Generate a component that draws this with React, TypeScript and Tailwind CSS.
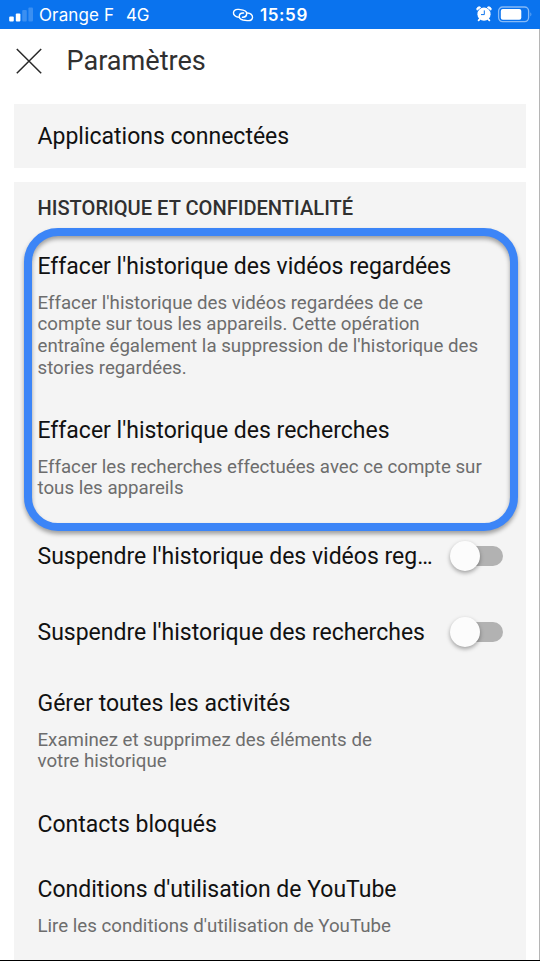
import type { ReactNode } from 'react';

interface SettingProps {
  title: string;
  lines?: string[];
  className: string;
}

function Setting({ title, lines, className }: SettingProps) {
  return (
    <div className={className}>
      <h2 className="whitespace-nowrap text-[23px] leading-7 text-[#111]">{title}</h2>
      {lines && (
        <p className="mt-[11.6px] whitespace-nowrap text-[18.7px] leading-[21.8px] text-[#6d6d6d]">
          {lines.map((line) => (
            <span key={line} className="block">
              {line}
            </span>
          ))}
        </p>
      )}
    </div>
  );
}

function ToggleRow({ children, className }: { children: ReactNode; className: string }) {
  return (
    <div className={`flex h-7 items-center justify-between pr-[23.5px] ${className}`}>
      <span className="whitespace-nowrap text-[23px] leading-7 text-[#111]">{children}</span>
      <button
        type="button"
        role="switch"
        aria-checked="false"
        className="-mt-0.5 flex h-5 w-[47px] items-center rounded-full bg-[#b2b2b2]"
      >
        <span className="-ml-[6px] size-[30px] shrink-0 rounded-full bg-[#fcfcfc] shadow-[0_2px_4px_rgba(0,0,0,0.35)]" />
      </button>
    </div>
  );
}

function StatusBar() {
  return (
    <div className="flex h-[29px] w-[540px] shrink-0 items-center bg-[#0a73ee] text-white">
      <svg viewBox="0 0 26 16" className="ml-2 h-4 w-[26px]" fill="currentColor">
        <rect x="1.2" y="9.5" width="4.6" height="5" rx="1" />
        <rect x="7.8" y="6.5" width="4.6" height="8" rx="1" />
        <rect x="14.2" y="3" width="4.6" height="11.5" rx="1" opacity=".2" />
        <rect x="20.4" y="0.5" width="4.6" height="14" rx="1" opacity=".2" />
      </svg>
      <span className="ml-[5px] w-[87px] whitespace-nowrap font-[Inter,sans-serif] text-[17px] leading-5 tracking-[0.12px]">
        Orange F
      </span>
      <span className="w-[106px] whitespace-nowrap font-[Inter,sans-serif] text-[17px] leading-5 tracking-[-0.3px]">
        4G
      </span>
      <svg
        viewBox="0 0 22 14"
        className="h-[14px] w-[22px]"
        fill="none"
        stroke="currentColor"
        strokeWidth="1.4"
        strokeLinecap="round"
      >
        <path d="M6.4 9.2C3.2 8.8 1.2 6.8 1.5 4.5C1.9 2 4.2 1.1 6.8 1.4L11 2.1C13.4 2.6 15 4.3 14.6 6.5C14.2 8.6 12.6 9.4 10.4 9.2" />
        <path d="M15.4 5C18.6 5.2 20.7 7 20.5 9.4C20.2 11.9 17.9 12.9 15.2 12.6L11 12C8.5 11.5 6.9 9.8 7.3 7.7C7.7 5.6 9.4 4.8 11.6 5" />
      </svg>
      <span className="ml-[6px] w-[216px] font-[Inter,sans-serif] text-[17px] font-semibold leading-5 tracking-[0.6px]">
        15:59
      </span>
      <svg viewBox="0 0 16 16" className="-mt-px h-4 w-4 shrink-0" fill="currentColor">
        <path d="M1 4.2A2.4 2.4 0 0 1 4.8 1.4ZM15 4.2A2.4 2.4 0 0 0 11.2 1.4Z" stroke="currentColor" strokeWidth=".8" />
        <path d="M2.6 14.4L4.2 12.6M13.4 14.4L11.8 12.6" stroke="currentColor" strokeWidth="1.8" strokeLinecap="round" />
        <circle cx="8" cy="8.2" r="6.6" />
        <path d="M8.3 4.4V8.6H5" fill="none" stroke="#0a73ee" strokeWidth="1" />
      </svg>
      <svg viewBox="0 0 36 17" className="-mt-px ml-[5px] h-[17px] w-9 shrink-0">
        <rect x="1.6" y="1" width="30" height="14.6" rx="4" fill="none" stroke="white" strokeOpacity=".5" strokeWidth="1.3" />
        <rect x="3.8" y="3" width="20.5" height="10.7" rx="2" fill="white" />
        <path d="M33.4 6.2Q35.4 8.3 33.4 10.4Z" fill="white" fillOpacity=".4" />
      </svg>
    </div>
  );
}

export default function App() {
  return (
    <div className="flex h-[961px] w-[540px] flex-col overflow-hidden border-b border-black bg-white font-[Roboto,sans-serif]">
      <StatusBar />
      <div className="flex min-h-0 flex-1 flex-col border-r border-[#b5b5b5]">
        <header className="flex h-[75px] shrink-0 items-start pl-4 pt-4">
          <svg viewBox="0 0 26 26" className="mt-[3px] size-[26px]" fill="none" stroke="#292929" strokeWidth="1.5">
            <path d="M.8 1L25.2 25.2M25.2 1L.8 25.2" />
          </svg>
          <h1 className="ml-[24.5px] whitespace-nowrap text-[27.1px] leading-8 text-[#303030]">Paramètres</h1>
        </header>

        <section className="ml-[14px] flex h-16 w-[512px] shrink-0 items-center bg-[#f4f4f4] pl-[23.5px] pt-0.5">
          <span className="whitespace-nowrap text-[23px] leading-7 text-[#111]">Applications connectées</span>
        </section>

        <section className="relative ml-[14px] mt-[14px] min-h-0 w-[512px] flex-1 bg-[#f4f4f4] pl-[23.5px] pt-3">
          <h3 className="whitespace-nowrap text-[20.1px] font-medium leading-7 text-[#303030]">
            HISTORIQUE ET CONFIDENTIALITÉ
          </h3>
          <Setting
            className="mt-[31px] h-[164px]"
            title="Effacer l'historique des vidéos regardées"
            lines={[
              "Effacer l'historique des vidéos regardées de ce",
              'compte sur tous les appareils. Cette opération',
              "entraîne également la suppression de l'historique des",
              'stories regardées.',
            ]}
          />
          <Setting
            className="h-[126px]"
            title="Effacer l'historique des recherches"
            lines={['Effacer les recherches effectuées avec ce compte sur', 'tous les appareils']}
          />
          <ToggleRow className="mb-12">Suspendre l'historique des vidéos reg…</ToggleRow>
          <ToggleRow className="mb-[43px]">Suspendre l'historique des recherches</ToggleRow>
          <Setting
            className="h-[121px]"
            title="Gérer toutes les activités"
            lines={['Examinez et supprimez des éléments de', 'votre historique']}
          />
          <Setting className="h-[65px]" title="Contacts bloqués" />
          <Setting
            className="h-[70px]"
            title="Conditions d'utilisation de YouTube"
            lines={["Lire les conditions d'utilisation de YouTube"]}
          />

          {/* highlight frame around the two "clear history" entries */}
          <div className="pointer-events-none absolute left-[10px] top-[46px] h-[303px] w-[494px] rounded-[34px] border-8 border-[#3c85f7] drop-shadow-[0_3px_2px_rgba(0,0,0,0.35)]" />
        </section>
      </div>
    </div>
  );
}
